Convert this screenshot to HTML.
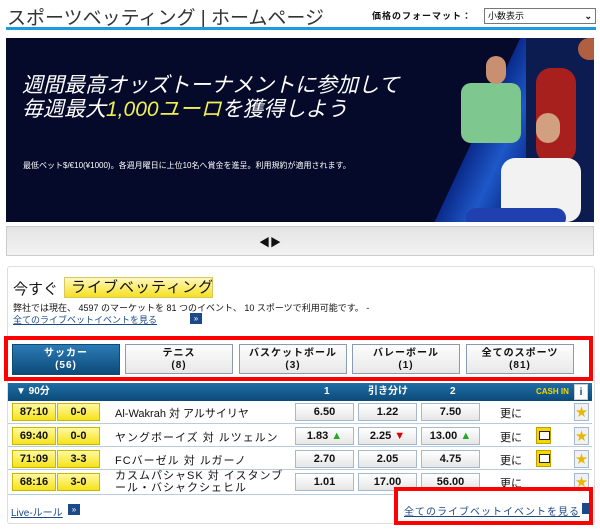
<!DOCTYPE html>
<html><head><meta charset="utf-8"><style>
*{margin:0;padding:0;box-sizing:border-box}
body{width:600px;height:532px;background:#fff;position:relative;overflow:hidden;font-family:"Liberation Sans","Noto Sans CJK JP",sans-serif;color:#111}
.a{position:absolute;white-space:nowrap}
.tab{position:absolute;top:344px;height:30px;width:108px;background:linear-gradient(#fdfdfd,#e8e8e8);border:1px solid #8a9ab0;font-size:10px;font-weight:bold;text-align:center;line-height:12px;padding-top:3px;letter-spacing:1px}
.tab.on{background:linear-gradient(#2c7bb5,#0c4a78);color:#fff;border-color:#0c4a78}
.yb{position:absolute;height:18px;background:linear-gradient(#fff9a0,#f5e21a);border:1px solid #c8b800;font-size:11px;text-align:center;line-height:16px;font-weight:bold}
.ob{position:absolute;height:18px;width:59px;background:linear-gradient(#fff,#e6e6e6);border:1px solid #a8b8cc;font-size:11px;text-align:center;line-height:16px;font-weight:bold}
.tv{position:absolute;width:15px;height:17px;background:#f5d800;border:1px solid #c0a000}
.tv:after{content:"";position:absolute;left:2px;top:3px;width:9px;height:7px;border:1.5px solid #222;background:#fff}
.st{position:absolute;width:15px;height:18px;background:#eef2f8;border:1px solid #a8b8cc;color:#e8b800;font-size:12px;text-align:center;line-height:16px}
.ln{position:absolute;left:8px;width:584px;height:1px;background:#b8cce0}
</style></head><body>
<div class="a" style="left:7px;top:3px;font-size:19px;color:#333">スポーツベッティング | ホームページ</div>
<div class="a" style="left:372px;top:9px;font-size:9px;font-weight:bold;letter-spacing:1px">価格のフォーマット：</div>
<div class="a" style="left:484px;top:8px;width:112px;height:16px;border:1px solid #777;font-size:9px;line-height:14px;padding-left:3px">小数表示<span style="position:absolute;right:3px;top:0;font-weight:bold">⌄</span></div>
<div class="a" style="left:6px;top:27px;width:590px;height:3px;background:#1a9be0"></div>
<div class="a" style="left:6px;top:38px;width:588px;height:184px;background:#060a2a;overflow:hidden">
 <div style="position:absolute;left:470px;top:-20px;width:70px;height:230px;background:linear-gradient(90deg,#0a2a8a,#1e58c8,#0a2a8a);transform:skewX(-25deg)"></div>
 <div style="position:absolute;left:520px;top:0;width:70px;height:184px;background:#0d1c50"></div>
 <div style="position:absolute;left:530px;top:30px;width:40px;height:95px;background:#a8201e;border-radius:15px"></div>
 <div style="position:absolute;left:455px;top:45px;width:60px;height:60px;background:#7ec890;border-radius:10px"></div>
 <div style="position:absolute;left:480px;top:18px;width:20px;height:28px;background:#c89070;border-radius:10px"></div>
 <div style="position:absolute;left:495px;top:120px;width:80px;height:64px;background:#f2f2f2;border-radius:14px"></div>
 <div style="position:absolute;left:460px;top:170px;width:100px;height:20px;background:#2040b0;border-radius:10px"></div>
 <div style="position:absolute;left:530px;top:75px;width:24px;height:30px;background:#d0a080;border-radius:12px"></div>
 <div style="position:absolute;left:572px;top:0px;width:24px;height:22px;background:#b06040;border-radius:12px"></div>
 <div class="a" style="left:16px;top:36px;font-size:21px;color:#fff;font-style:italic;line-height:24px">週間最高オッズトーナメントに参加して<br>毎週最大<span style="color:#f0f050">1,000ユーロ</span>を獲得しよう</div>
 <div class="a" style="left:17px;top:122px;font-size:8px;color:#fff">最低ベット$/€10(¥1000)。各週月曜日に上位10名へ賞金を進呈。利用規約が適用されます。</div>
</div>
<div class="a" style="left:6px;top:226px;width:588px;height:30px;background:linear-gradient(#e4e4e4,#f2f2f2);border:1px solid #ccc"></div>
<div class="a" style="left:259px;top:234px;font-size:11px;color:#111">◀▶</div>
<div class="a" style="left:7px;top:266px;width:588px;height:258px;border:1px solid #ddd;border-radius:3px;background:#fff"></div>
<div class="a" style="left:13px;top:278px;font-size:15px">今すぐ</div>
<div class="a" style="left:64px;top:277px;width:149px;height:21px;background:linear-gradient(#fff8c0,#f5e020);border:1px solid #d8c860;font-size:15px;line-height:19px;padding-left:6px;letter-spacing:1px">ライブベッティング</div>
<div class="a" style="left:13px;top:301px;font-size:9px">弊社では現在、 4597 のマーケットを 81 つのイベント、 10 スポーツで利用可能です。 -</div>
<div class="a" style="left:13px;top:313px;font-size:9px;color:#1a4a8a;text-decoration:underline">全てのライブベットイベントを見る</div>
<div class="a" style="left:190px;top:313px;width:12px;height:11px;background:#1a4a8a;color:#fff;font-size:8px;line-height:11px;text-align:center">»</div>
<div class="a" style="left:4px;top:336px;width:589px;height:45px;border:4px solid #f00"></div>
<div class="tab on" style="left:12px;top:344px;width:108px;height:31px">サッカー<br>(56)</div>
<div class="tab" style="left:125px">テニス<br>(8)</div>
<div class="tab" style="left:239px">バスケットボール<br>(3)</div>
<div class="tab" style="left:352px">バレーボール<br>(1)</div>
<div class="tab" style="left:466px">全てのスポーツ<br>(81)</div>
<div class="a" style="left:8px;top:383px;width:584px;height:18px;background:linear-gradient(#1f6ea6,#0c4a78);color:#fff;font-size:10px;font-weight:bold;line-height:18px">
 <span class="a" style="left:8px">▼ 90分</span><span class="a" style="left:316px">1</span><span class="a" style="left:360px">引き分け</span><span class="a" style="left:442px">2</span><span class="a" style="left:528px;color:#f5d800;font-size:8px">CASH IN</span><span class="a" style="left:566px;top:1px;width:14px;height:16px;background:#fff;color:#0c4a78;text-align:center;line-height:16px;border:1px solid #ccc">i</span>
</div>
<div class="yb" style="left:12px;top:403px;width:44px">87:10</div><div class="yb" style="left:57px;top:403px;width:43px">0-0</div>
<div class="a" style="left:115px;top:405px;font-size:11px">Al-Wakrah 対 アルサイリヤ</div>
<div class="ob" style="left:295px;top:403px">6.50</div><div class="ob" style="left:358px;top:403px">1.22</div><div class="ob" style="left:421px;top:403px">7.50</div>
<div class="a" style="left:500px;top:405px;font-size:11px">更に</div><div class="st" style="left:574px;top:403px">★</div>
<div class="ln" style="top:423px"></div>
<div class="yb" style="left:12px;top:427px;width:44px">69:40</div><div class="yb" style="left:57px;top:427px;width:43px">0-0</div>
<div class="a" style="left:115px;top:429px;font-size:11px;letter-spacing:1px">ヤングボーイズ 対 ルツェルン</div>
<div class="ob" style="left:295px;top:427px">1.83 <span style="color:#2a2">▲</span></div><div class="ob" style="left:358px;top:427px">2.25 <span style="color:#d00">▼</span></div><div class="ob" style="left:421px;top:427px">13.00 <span style="color:#2a2">▲</span></div>
<div class="a" style="left:500px;top:429px;font-size:11px">更に</div><div class="tv" style="left:536px;top:427px"></div><div class="st" style="left:574px;top:427px">★</div>
<div class="ln" style="top:446px"></div>
<div class="yb" style="left:12px;top:450px;width:44px">71:09</div><div class="yb" style="left:57px;top:450px;width:43px">3-3</div>
<div class="a" style="left:115px;top:452px;font-size:11px;letter-spacing:1px">FCバーゼル 対 ルガーノ</div>
<div class="ob" style="left:295px;top:450px">2.70</div><div class="ob" style="left:358px;top:450px">2.05</div><div class="ob" style="left:421px;top:450px">4.75</div>
<div class="a" style="left:500px;top:452px;font-size:11px">更に</div><div class="tv" style="left:536px;top:450px"></div><div class="st" style="left:574px;top:450px">★</div>
<div class="ln" style="top:469px"></div>
<div class="yb" style="left:12px;top:473px;width:44px">68:16</div><div class="yb" style="left:57px;top:473px;width:43px">3-0</div>
<div class="a" style="left:115px;top:470px;font-size:11px;line-height:12px;letter-spacing:1px">カスムパシャSK 対 イスタンブ<br>ール・バシャクシェヒル</div>
<div class="ob" style="left:295px;top:473px">1.01</div><div class="ob" style="left:358px;top:473px">17.00</div><div class="ob" style="left:421px;top:473px">56.00</div>
<div class="a" style="left:500px;top:475px;font-size:11px">更に</div><div class="st" style="left:574px;top:473px">★</div>
<div class="ln" style="top:494px;width:385px"></div>
<div class="a" style="left:11px;top:504px;font-size:10px;color:#1a4a8a;text-decoration:underline">Live-ルール</div>
<div class="a" style="left:68px;top:504px;width:12px;height:11px;background:#1a4a8a;color:#fff;font-size:8px;line-height:11px;text-align:center">»</div>
<div class="a" style="left:394px;top:487px;width:199px;height:38px;border:4px solid #f00"></div>
<div class="a" style="left:404px;top:503px;font-size:10px;color:#1a4a8a;text-decoration:underline;letter-spacing:1px">全てのライブベットイベントを見る</div>
<div class="a" style="left:582px;top:503px;width:8px;height:11px;background:#1a4a8a"></div>
</body></html>
